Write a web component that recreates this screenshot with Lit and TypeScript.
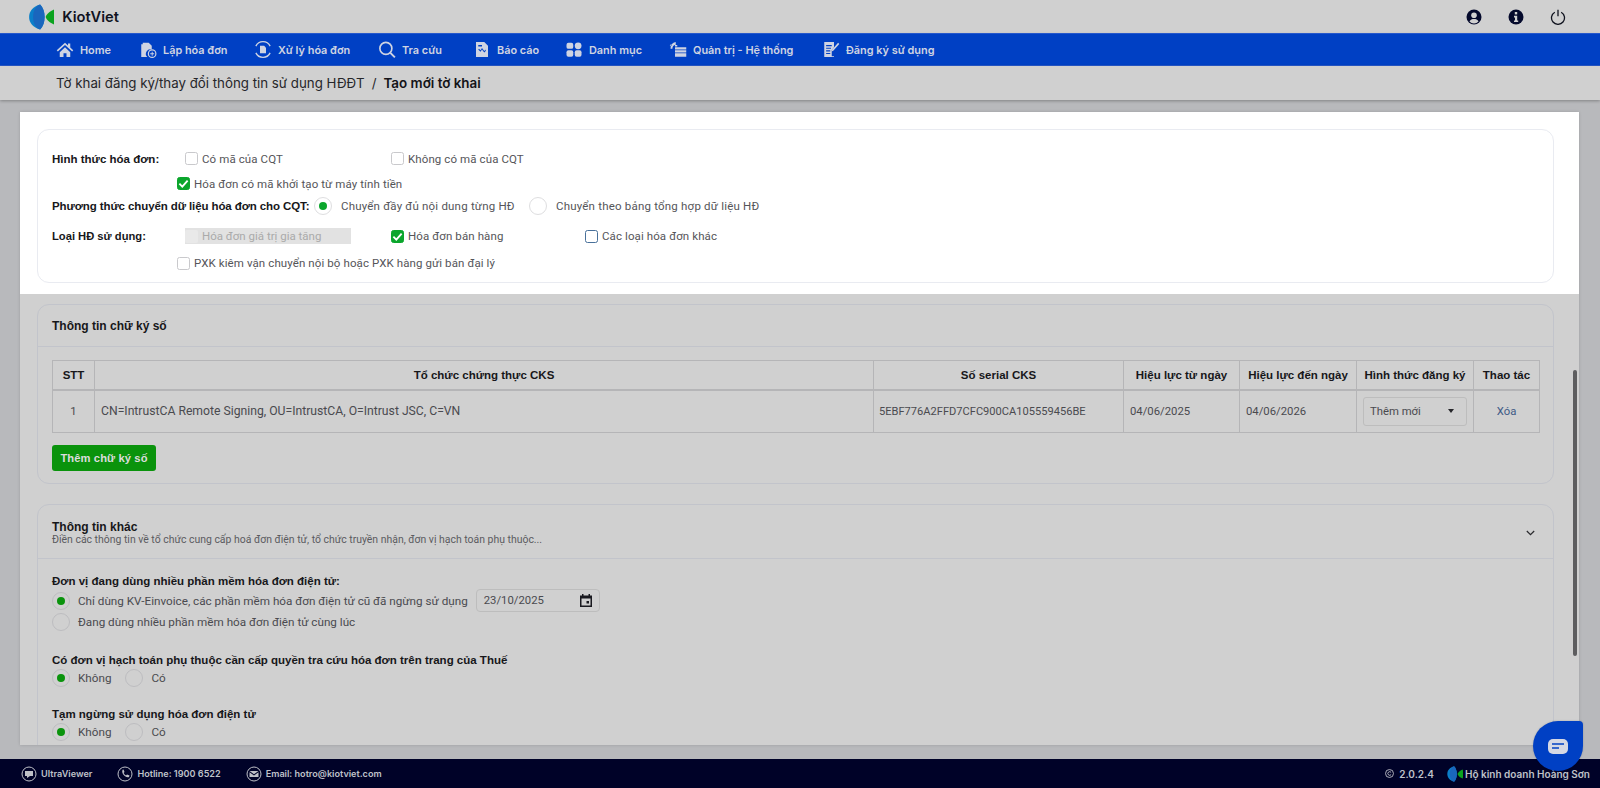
import { LitElement, html, css, svg } from "lit";
import { customElement } from "lit/decorators.js";

const logo = (h: number) => html`<svg class="logo" width=${h * 0.97} height=${h} viewBox="0 0 25 26"><path d="M11 0.5C4 2.5 0 7 0 13s4 10.5 11 12.5c3-3 4.500-7.500 4.500-12.500S14 3.500 11 0.500z" fill="#0b7fc9"/><path d="M11 0.500C6 2.500 4 7 4 13s2 10.500 7 12.500c3-3 4.500-7.500 4.500-12.500S14 3.500 11 0.500z" fill="#1a66bd"/><path d="M25 5.500c-4 1.500-7.500 4.500-8.500 7.500 1 3 4.500 6 8.500 7.500 1-2.500 1-12.500 0-15z" fill="#0ba31f"/></svg>`;

const navIcons: Record<string, unknown> = {
  home: svg`<path d="M12 3 1 13l1.500 1.500L12 6l9.500 8.500L23 13l-4-3.600V4h-3v2.700z"/><path d="M5 15.500 12 9l7 6.500V22h-5v-5h-4v5H5z"/>`,
  add: svg`<path d="M3 5h2V3h8l4 4v5a6 6 0 0 0-6 10H3z"/><circle cx="17.500" cy="17.500" r="5" fill="none" stroke="currentColor" stroke-width="1.600"/><path d="M17 15h1.200v2h2v1.200h-2v2H17v-2h-2V17h2z"/>`,
  proc: svg`<path d="M12 1.500a10.500 10.500 0 0 1 9.500 6M12 22.500a10.500 10.500 0 0 1-9.500-6M2.500 7.500A10.500 10.500 0 0 1 12 1.500M21.500 16.500A10.500 10.500 0 0 1 12 22.500" fill="none" stroke="currentColor" stroke-width="1.800"/><path d="M8 7h5.500L16 9.500V17H8z"/>`,
  search: svg`<circle cx="10.500" cy="10.500" r="8" fill="none" stroke="currentColor" stroke-width="2.200"/><path d="m16.500 16.500 6 6" stroke="currentColor" stroke-width="2.600"/>`,
  report: svg`<path fill-rule="evenodd" d="M4 2h11l5 5v15H4zM7 12l3 3 2-3 3 4 2-2v-2l-2 2-3-4-2 3-2-2zM7 6v2h5V6z"/>`,
  cat: svg`<rect x="2" y="3" width="9" height="8" rx="2.500"/><circle cx="17.500" cy="7" r="4.500"/><rect x="2" y="13" width="9" height="8.500" rx="2.500"/><rect x="13" y="13" width="9" height="8.500" rx="2.500"/>`,
  admin: svg`<path d="M9 2a8 8 0 0 0-7 9h2.500A5.500 5.500 0 0 1 9 5.500zM1 7l1.500-2 1.500 2zM8 6h3v2H8z"/><path d="M8 9h15v3H8zM8 13h15v3H8zM8 17h15v4.500H8z"/>`,
  reg: svg`<path fill-rule="evenodd" d="M3 2h13v7l-3 3.500V21h3v1H3zM5.500 6v1.500H13V6zm0 3.500V11H12V9.500zm0 3.500v1.500H11V13zm0 3.500V18H11v-1.500z"/><path d="m21.500 3 1.500 1.500-8 9-2.500 1 1-2.500z"/>`,
};

const nav: [string, string, number][] = [
  ["home", "Home", 83],
  ["add", "Lập hóa đơn", 115],
  ["proc", "Xử lý hóa đơn", 124],
  ["search", "Tra cứu", 95],
  ["report", "Báo cáo", 92],
  ["cat", "Danh mục", 104],
  ["admin", "Quản trị - Hệ thống", 153],
  ["reg", "Đăng ký sử dụng", 120],
];

const check = html`<svg width="11" height="11" viewBox="0 0 12 12"><path d="M1.500 6.200 4.700 9.400 10.500 2.800" fill="none" stroke="#fff" stroke-width="2"/></svg>`;

@customElement("app-root")
export class AppRoot extends LitElement {
  static styles = css`
    :host { display: block; width: 1600px; height: 788px; overflow: hidden; position: relative; background: #b8b9bc; font-family: "Roboto", "Noto Sans", sans-serif; color: #3a3a3d; font-size: 13px; }
    * { box-sizing: border-box; }
    svg { flex: none; display: block; }
    .top { height: 33px; background: #d0d0d0; display: flex; align-items: center; padding: 0 34px 0 29px; }
    .brand { display: flex; align-items: center; gap: 8px; font-family: "Inter", sans-serif; font-weight: 600; font-size: 14.700px; color: #10131f; flex: 1; }
    .tools { display: flex; gap: 26px; align-items: center; }
    .nav { height: 33px; background: #0040c4; border-top: 1px solid #2558cc; border-bottom: 1px solid #2558cc; display: flex; align-items: center; padding-left: 56px; box-shadow: 0 3px 6px rgba(0,0,0,.15); position: relative; }
    .ni { display: flex; align-items: center; gap: 6px; color: #cfd4e2; font-family: "Inter", sans-serif; font-weight: 600; font-size: 10.900px; white-space: nowrap; flex: none; }
    .ni svg { width: 18px; height: 19px; fill: currentColor; }
    .crumb { height: 34px; background: #d0d0d0; display: flex; align-items: center; padding-left: 56px; font-family: "Inter", sans-serif; font-size: 13.300px; color: #26262a; gap: 7px; box-shadow: 0 1px 3px rgba(0,0,0,.3); position: relative; }
    .crumb b { font-weight: 600; font-size: 13.400px; color: #141418; }
    .panel { position: absolute; left: 20px; top: 112px; width: 1559px; height: 633px; background: #d0d0d0; box-shadow: 0 0 3px rgba(0,0,0,.15); overflow: hidden; }
    .highlight { background: #fff; height: 182px; padding: 17px 25px 11px 17px; }
    .hcard { height: 154px; width: 1517px; border: 1px solid #e9ebf1; border-radius: 12px; padding: 20px 14px 0 13px; color: #555559; font-size: 11.500px; position: relative; }
    .row { display: flex; align-items: center; }
    .r1 { height: 17px; }
    .r2 { height: 17px; margin-top: 8px; padding-left: 126px; }
    .r3 { height: 20px; margin-top: 4px; }
    .r4 { height: 20px; margin-top: 10px; }
    .r5 { height: 18px; margin-top: 8px; padding-left: 126px; }
    .lbl { font-family: "Liberation Sans", sans-serif; font-weight: 700; color: #17171a; font-size: 11.500px; white-space: nowrap; flex: none; }
    .w1 { width: 134px; padding-left: 1px; }
    .w2 { width: 263px; padding-left: 1px; letter-spacing: -.1px; }
    .w3 { width: 134px; font-size: 11.200px; padding-left: 1px; }
    .cb { display: flex; align-items: center; gap: 4px; white-space: nowrap; letter-spacing: .1px; flex: none; }
    .rgap { gap: 9px; letter-spacing: .2px; }
    .c206 { width: 206px; }
    .c215 { width: 215px; }
    .c194 { width: 194px; }
    .box { width: 13px; height: 13px; border: 1px solid #c9c9cc; border-radius: 2.500px; background: #fff; display: flex; align-items: center; justify-content: center; flex: none; }
    .box.on { background: #0ba62c; border-color: #0ba62c; }
    .box.focus { border-color: #48709a; }
    .disabled { width: 166px; height: 16px; background: #e2e2e2; color: #aaa; line-height: 16px; display: flex; align-items: center; gap: 4px; margin-right: 40px; flex: none; }
    .disabled i { width: 13px; height: 13px; background: #e9e9e9; border-radius: 2px; }
    .rad { width: 18px; height: 18px; border: 1px solid #dedee0; border-radius: 50%; display: flex; align-items: center; justify-content: center; flex: none; }
    .rad.on::after { content: ""; width: 8px; height: 8px; border-radius: 50%; background: #0ba62c; }
    .grey .rad { border-color: #bdbdc0; }
    .grey .rad.on::after { background: #0a930c; }
    .card { position: absolute; left: 17px; width: 1517px; border: 1px solid #c2c4cb; border-radius: 12px; }
    .sig { top: 192px; height: 180px; }
    .sig h3 { margin: 0; height: 42px; line-height: 42px; padding-left: 14px; border-bottom: 1px solid #c2c4cb; font-family: "Liberation Sans", sans-serif; font-size: 12px; color: #17171a; font-weight: 700; }
    .body { padding: 13px 14px; }
    table { border-collapse: collapse; width: 1487px; table-layout: fixed; font-size: 11.300px; color: #4a4a4f; }
    th, td { border: 1px solid #b5b5b7; text-align: center; padding: 0; }
    th { height: 29px; font-family: "Liberation Sans", sans-serif; font-weight: 700; font-size: 11.500px; color: #17171a; border-bottom-width: 2px; }
    td { height: 43px; }
    td.l { text-align: left; padding-left: 6px; }
    td.cn { font-size: 12.200px; }
    td.serial { font-size: 11.100px; padding-left: 5px; }
    .sel { width: 104px; height: 29px; margin: 0 auto; border: 1px solid #bdbdbd; border-radius: 3px; display: flex; align-items: center; justify-content: space-between; padding: 0 12px 0 6px; }
    .sel i { width: 0; height: 0; border: 3.500px solid transparent; border-top: 4px solid #26262a; border-bottom: 0; }
    .del { color: #3e5a86; }
    .btn { margin-top: 12px; width: 104px; height: 26px; background: #0a930c; color: #dcdcdc; border-radius: 3px; font-family: "Liberation Sans", sans-serif; font-weight: 700; font-size: 11.200px; letter-spacing: .1px; display: flex; align-items: center; justify-content: center; }
    .other { top: 392px; height: 300px; }
    .ohead { height: 54px; border-bottom: 1px solid #c2c4cb; padding: 16px 18px 0 14px; display: flex; justify-content: space-between; }
    .ohead b { display: block; font-family: "Liberation Sans", sans-serif; font-size: 12px; color: #17171a; line-height: 13px; }
    .ohead span { display: block; font-size: 10.450px; color: #5b5b60; line-height: 12px; }
    .chev { margin: 9px 0 0; }
    .obody { padding: 16px 14px; color: #4a4a4f; font-size: 11.700px; }
    .q { font-family: "Liberation Sans", sans-serif; font-weight: 700; color: #17171a; font-size: 11.500px; height: 13px; line-height: 13px; }
    .opt { display: flex; align-items: center; gap: 8px; height: 21px; margin-top: 0; }
    .opt1 { margin-top: 2px; }
    .date { width: 124px; height: 23px; border: 1px solid #bdbdbd; border-radius: 4px; display: flex; align-items: center; justify-content: space-between; padding: 0 7px; font-size: 11.300px; }
    .q2 { margin-top: 22px; }
    .q3 { margin-top: 20px; }
    .gap { width: 0; margin-left: -2px; }
    .sb { position: absolute; right: 2px; top: 258px; width: 4px; height: 286px; background: #5d5d5f; border-radius: 2px; }
    .foot { position: absolute; left: 0; right: 0; bottom: 0; height: 29px; background: #000228; color: #bfc1c8; display: flex; align-items: center; padding: 0 10px 0 21px; font-family: "Inter", sans-serif; font-weight: 600; font-size: 9.100px; }
    .fi { display: flex; align-items: center; gap: 4px; margin-right: 25px; white-space: nowrap; }
    .fi svg { width: 16px; height: 16px; }
    .sp { flex: 1; }
    .ver { margin-right: 13px; gap: 5px; font-size: 10px; }
    .ver svg { width: 9px; height: 9px; }
    .org { margin: 0; gap: 2px; font-size: 10px; }
    .chat { position: absolute; left: 1533px; top: 721px; width: 50px; height: 50px; background: #0040c4; border-radius: 50% 4px 50% 50%; display: flex; align-items: center; justify-content: center; box-shadow: 0 0 2px rgba(0,0,0,.2); }
  `;

  private radio(on: boolean) { return html`<span class="rad ${on ? "on" : ""}"></span>`; }

  private box(on = false, extra = "") {
    return html`<span class="box ${on ? "on" : ""} ${extra}">${on ? check : ""}</span>`;
  }

  render() {
    return html`
      <div class="top">
        <div class="brand">${logo(26)}<span>KiotViet</span></div>
        <div class="tools">
          <svg width="16" height="16" viewBox="0 0 16 16"><circle cx="8" cy="8" r="7.500" fill="#050a2c"/><circle cx="8" cy="6.300" r="2.800" fill="#d0d0d0"/><path d="M3.500 12.500C4.500 10.500 6 10 8 10s3.500.5 4.500 2.500a6 6 0 0 1-9 0z" fill="#d0d0d0"/></svg>
          <svg width="16" height="16" viewBox="0 0 16 16"><circle cx="8" cy="8" r="7.500" fill="#050a2c"/><rect x="6.800" y="3" width="2.400" height="2.400" fill="#d0d0d0"/><path d="M6 6.800h3.200v4.600H10.200V13H6v-1.600h1V8.400H6z" fill="#d0d0d0"/></svg>
          <svg width="16" height="16" viewBox="0 0 16 16" fill="none" stroke="#10131f" stroke-width="1.300"><path d="M4.800 3.200a6.500 6.500 0 1 0 6.400 0M8 .8v6.500"/></svg>
        </div>
      </div>
      <div class="nav">
        ${nav.map(([i, t, w]) => html`<div class="ni" style="width:${w}px"><svg viewBox="0 0 24 24">${navIcons[i]}</svg><span>${t}</span></div>`)}
      </div>
      <div class="crumb"><span>Tờ khai đăng ký/thay đổi thông tin sử dụng HĐĐT</span><span>/</span><b>Tạo mới tờ khai</b></div>

      <div class="panel">
        <div class="highlight">
          <div class="hcard">
            <div class="row r1"><span class="lbl w1">Hình thức hóa đơn:</span><span class="cb c206">${this.box()}Có mã của CQT</span><span class="cb">${this.box()}Không có mã của CQT</span></div>
            <div class="row r2"><span class="cb">${this.box(true)}Hóa đơn có mã khởi tạo từ máy tính tiền</span></div>
            <div class="row r3"><span class="lbl w2">Phương thức chuyển dữ liệu hóa đơn cho CQT:</span><span class="cb rgap c215">${this.radio(true)}Chuyển đầy đủ nội dung từng HĐ</span><span class="cb rgap">${this.radio(false)}Chuyển theo bảng tổng hợp dữ liệu HĐ</span></div>
            <div class="row r4"><span class="lbl w3">Loại HĐ sử dụng:</span><span class="disabled"><i></i>Hóa đơn giá trị gia tăng</span><span class="cb c194">${this.box(true)}Hóa đơn bán hàng</span><span class="cb">${this.box(false, "focus")}Các loại hóa đơn khác</span></div>
            <div class="row r5"><span class="cb">${this.box()}PXK kiêm vận chuyển nội bộ hoặc PXK hàng gửi bán đại lý</span></div>
          </div>
        </div>

        <div class="card sig">
          <h3>Thông tin chữ ký số</h3>
          <div class="body">
            <table>
              <colgroup><col style="width:42px"><col style="width:779px"><col style="width:250px"><col style="width:116px"><col style="width:117px"><col style="width:117px"><col style="width:66px"></colgroup>
              <tr><th>STT</th><th>Tổ chức chứng thực CKS</th><th>Số serial CKS</th><th>Hiệu lực từ ngày</th><th>Hiệu lực đến ngày</th><th>Hình thức đăng ký</th><th>Thao tác</th></tr>
              <tr><td>1</td><td class="l cn">CN=IntrustCA Remote Signing, OU=IntrustCA, O=Intrust JSC, C=VN</td><td class="l serial">5EBF776A2FFD7CFC900CA105559456BE</td><td class="l">04/06/2025</td><td class="l">04/06/2026</td><td><div class="sel"><span>Thêm mới</span><i></i></div></td><td class="del">Xóa</td></tr>
            </table>
            <div class="btn">Thêm chữ ký số</div>
          </div>
        </div>

        <div class="card other grey">
          <div class="ohead">
            <div><b>Thông tin khác</b><span>Điền các thông tin về tổ chức cung cấp hoá đơn điện tử, tổ chức truyền nhận, đơn vị hạch toán phụ thuộc...</span></div>
            <svg class="chev" width="9" height="6" viewBox="0 0 11 7" fill="none" stroke="#2a2a2e" stroke-width="1.500"><path d="m1 1 4.500 4.500L10 1"/></svg>
          </div>
          <div class="obody">
            <div class="q">Đơn vị đang dùng nhiều phần mềm hóa đơn điện tử:</div>
            <div class="opt opt1">${this.radio(true)}<span>Chỉ dùng KV-Einvoice, các phần mềm hóa đơn điện tử cũ đã ngừng sử dụng</span><span class="date">23/10/2025<svg width="12" height="13" viewBox="0 0 12 13"><path fill-rule="evenodd" d="M2 0h1.500v1.500h5V0H10v1.500h2V13H0V1.500h2zM1.500 4.500v7h9v-7zM6.500 7H9v2.500H6.500z" fill="#1a1a20"/></svg></span></div>
            <div class="opt">${this.radio(false)}<span>Đang dùng nhiều phần mềm hóa đơn điện tử cùng lúc</span></div>
            <div class="q q2">Có đơn vị hạch toán phụ thuộc cần cấp quyền tra cứu hóa đơn trên trang của Thuế</div>
            <div class="opt">${this.radio(true)}<span>Không</span><span class="gap"></span>${this.radio(false)}<span>Có</span></div>
            <div class="q q3">Tạm ngừng sử dụng hóa đơn điện tử</div>
            <div class="opt">${this.radio(true)}<span>Không</span><span class="gap"></span>${this.radio(false)}<span>Có</span></div>
          </div>
        </div>
        <div class="sb"></div>
      </div>

      <div class="foot">
        <div class="fi"><svg viewBox="0 0 16 16" fill="none" stroke="currentColor"><circle cx="8" cy="8" r="7"/><path d="M4 5h8v5H9l-3 2v-2H4z" fill="currentColor" stroke="none"/></svg>UltraViewer</div>
        <div class="fi"><svg viewBox="0 0 16 16" fill="none" stroke="currentColor"><circle cx="8" cy="8" r="7"/><path d="M5 4l1.500-.5L7.500 6 6.600 7c.5 1 1.400 1.900 2.400 2.400l1-.9 2.500 1-.5 1.500c-3 1.500-8-3.500-6.500-7z" fill="currentColor" stroke="none"/></svg>Hotline: 1900 6522</div>
        <div class="fi"><svg viewBox="0 0 16 16" fill="none" stroke="currentColor"><circle cx="8" cy="8" r="7"/><path d="M3.500 5h9L8 8.300zM3.500 6.200 8 9.500l4.500-3.300V11h-9z" fill="currentColor" stroke="none"/></svg>Email: hotro@kiotviet.com</div>
        <div class="sp"></div>
        <div class="fi ver"><svg viewBox="0 0 10 10" fill="none" stroke="currentColor"><circle cx="5" cy="5" r="4.400"/><path d="M6.800 3.800a2 2 0 1 0 0 2.400"/></svg>2.0.2.4</div>
        <div class="fi org">${logo(15)}<span>Hộ kinh doanh Hoàng Sơn</span></div>
      </div>
      <div class="chat"><svg width="20" height="15" viewBox="0 0 20 15"><rect width="20" height="15" rx="5" fill="#d5d8e4"/><path d="M4 5h12M4 9h7" stroke="#0040c4" stroke-width="1.500"/></svg></div>
    `;
  }
}
